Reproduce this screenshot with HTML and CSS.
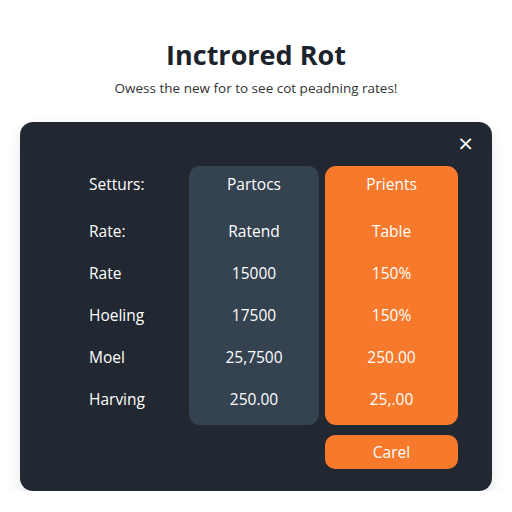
FILE: index.html
```html
<!DOCTYPE html>
<html lang="en">
<head>
    <meta charset="UTF-8">
    <meta name="viewport" content="width=device-width, initial-scale=1.0">
    <title>Inctrored Rot</title>
    <link rel="stylesheet" href="styles.css">
</head>
<body>

    <header class="intro">
        <h1>Inctrored Rot</h1>
        <p>Owess the new for to see cot peadning rates!</p>
    </header>

    <section class="panel">
        <button class="close" type="button">&times;</button>

        <div class="table">
            <div class="col labels">
                <div class="cell head">Setturs:</div>
                <div class="cell">Rate:</div>
                <div class="cell">Rate</div>
                <div class="cell">Hoeling</div>
                <div class="cell">Moel</div>
                <div class="cell">Harving</div>
            </div>
            <div class="col grey">
                <div class="cell head">Partocs</div>
                <div class="cell">Ratend</div>
                <div class="cell">15000</div>
                <div class="cell">17500</div>
                <div class="cell">25,7500</div>
                <div class="cell">250.00</div>
            </div>
            <div class="side">
                <div class="col orange">
                    <div class="cell head">Prients</div>
                    <div class="cell">Table</div>
                    <div class="cell">150%</div>
                    <div class="cell">150%</div>
                    <div class="cell">250.00</div>
                    <div class="cell">25,.00</div>
                </div>
                <button class="cancel" type="button">Carel</button>
            </div>
        </div>
    </section>

</body>
</html>
```

FILE: styles.css
```css
body {
    font-family: "Open Sans", "Noto Sans", Arial, sans-serif;
    margin: 0;
    background: #ffffff;
    color: #1f2630;
}
.intro {
    text-align: center;
    padding-top: 37px;
}
.intro h1 {
    font-size: 27px;
    font-weight: 700;
    margin: 0;
    line-height: 36px;
    color: #1c232c;
}
.intro p {
    font-size: 13.5px;
    margin: 5px 0 0;
    line-height: 20px;
    color: #333;
}
.panel {
    position: relative;
    margin: 24px 20px 0;
    height: 369px;
    box-sizing: border-box;
    padding: 44px 34px 22px 69px;
    background: #222831;
    border-radius: 13px;
    box-shadow: 0 6px 14px rgba(30, 50, 70, 0.12);
}
.close {
    position: absolute;
    top: 11px;
    right: 18px;
    background: none;
    border: none;
    color: #ffffff;
    font-size: 20px;
    line-height: 20px;
    padding: 0;
    font-family: "DejaVu Sans", sans-serif;
    cursor: pointer;
}
.table {
    display: flex;
    color: #ffffff;
    font-size: 15.5px;
}
.col {
    display: flex;
    flex-direction: column;
    padding-bottom: 5px;
    border-radius: 11px;
}
.cell {
    height: 42px;
    display: flex;
    align-items: center;
    justify-content: center;
}
.cell.head {
    height: 36px;
    margin-bottom: 8px;
}
.labels {
    width: 100px;
}
.labels .cell {
    justify-content: flex-start;
}
.grey {
    width: 130px;
    background: #35424f;
    margin-right: 6px;
    height: 254px;
}
.side {
    display: flex;
    flex-direction: column;
    width: 133px;
}
.orange {
    background: #f7792b;
    height: 254px;
}
.cancel {
    margin-top: 10px;
    height: 34px;
    border: none;
    border-radius: 10px;
    background: #f7792b;
    color: #ffffff;
    font-family: inherit;
    font-size: 15.5px;
    cursor: pointer;
}
```
